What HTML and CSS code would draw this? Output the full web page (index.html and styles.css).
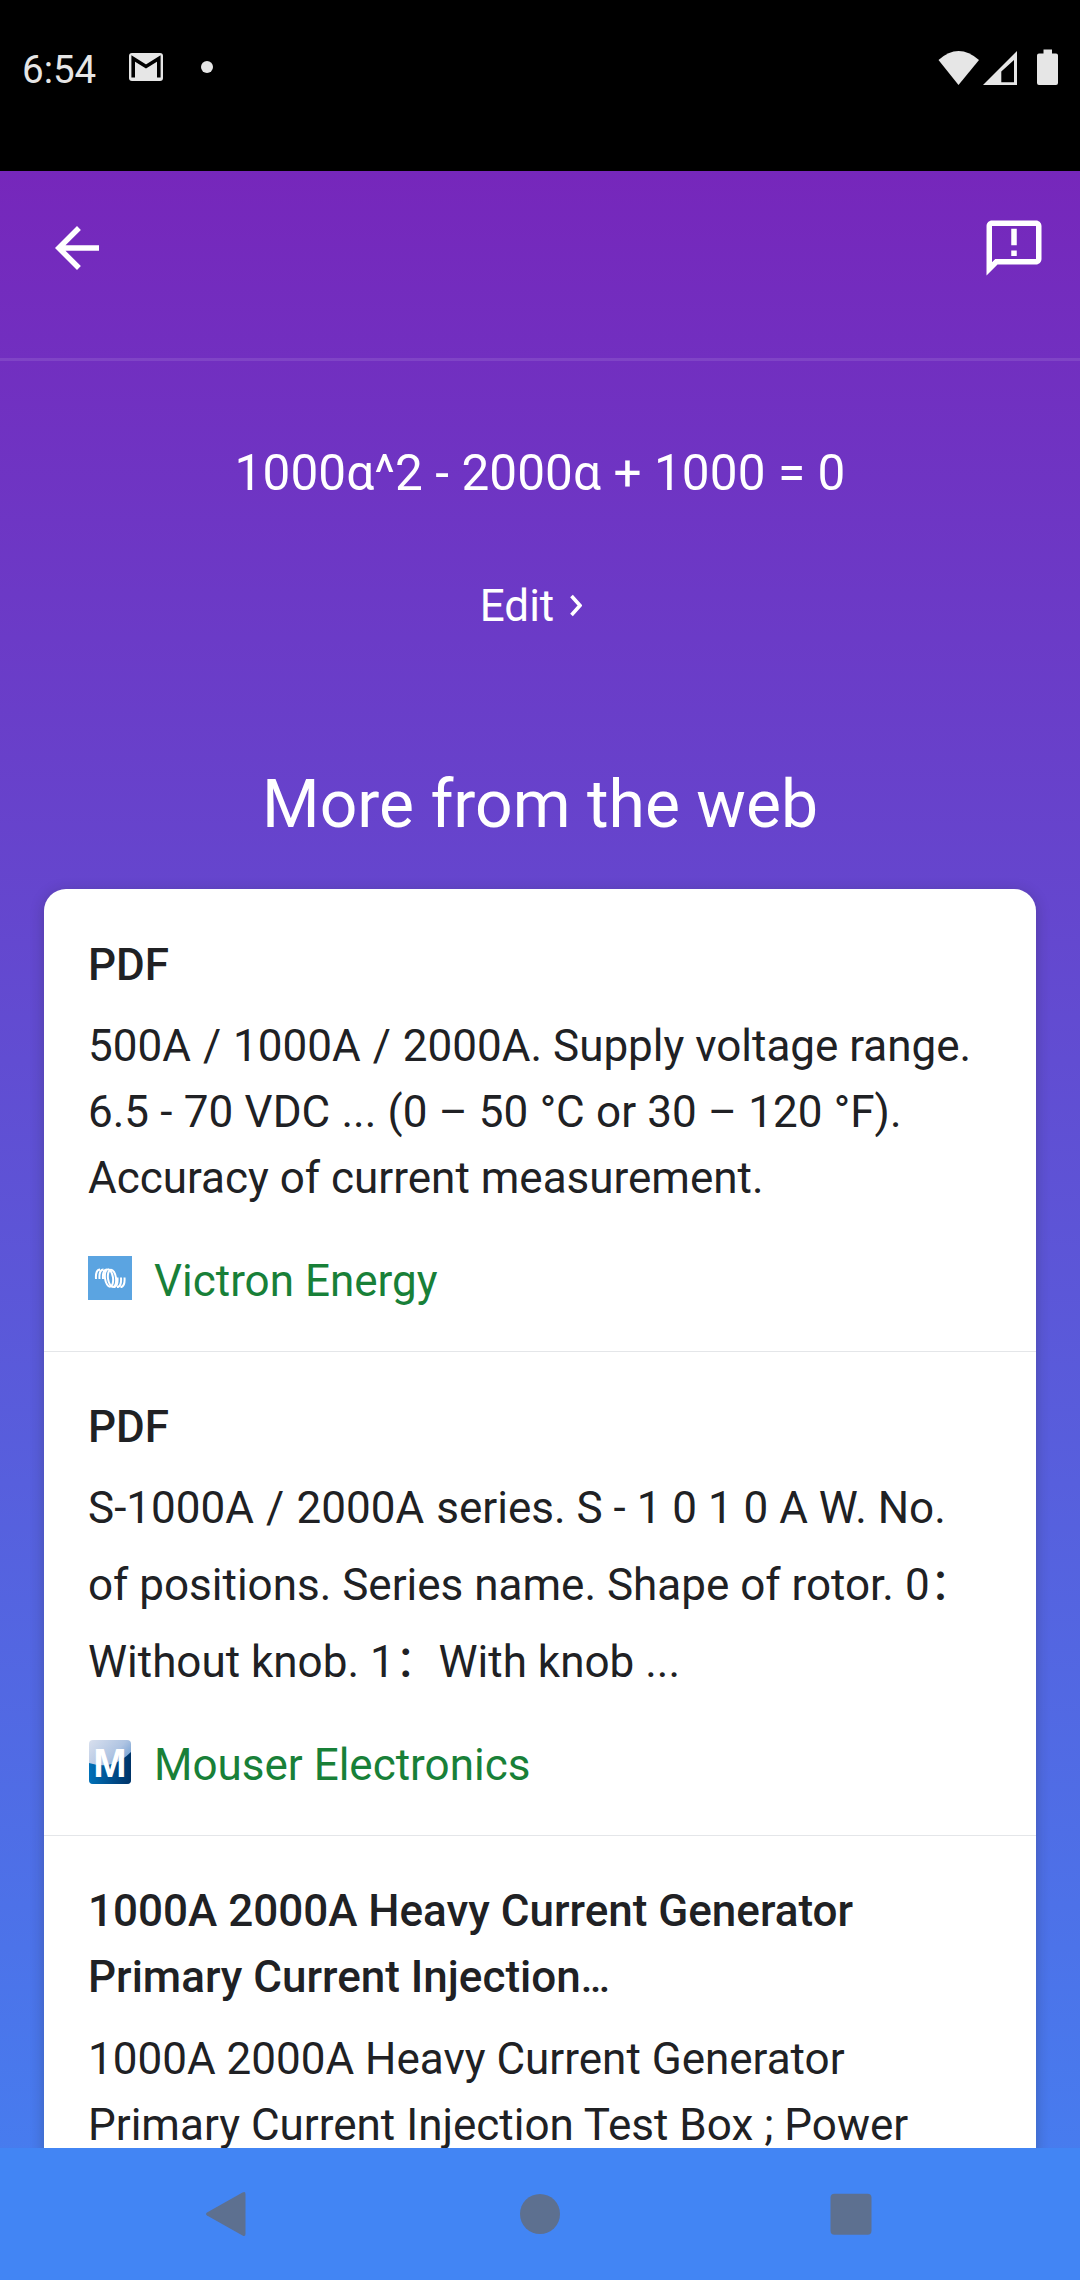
FILE: index.html
```html
<!DOCTYPE html>
<html lang="en">
<head>
<meta charset="utf-8">
<title>More from the web</title>
<link rel="stylesheet" href="styles.css">
</head>
<body>
<div class="screen">
  <header class="status">
    <span class="clock">6:54</span>
    <svg class="mail" width="36" height="30" viewBox="0 0 36 30"><rect x="1" y="1" width="34" height="28" rx="3" fill="#e6e6e6"/><path d="M5.200 25.500V6.500L18 14.500L30.800 6.500V25.500" fill="none" stroke="#000" stroke-width="3.600"/></svg>
    <span class="dot"></span>
    <span class="spacer"></span>
    <svg class="signals" width="122" height="38" viewBox="0 0 122 38" fill="#e6e6e6"><path d="M0.500 11Q20.500 -7 41 11L20.500 36Z"/><path fill-rule="evenodd" d="M45 36L79 2V36ZM63.300 33.300H76V11L63.300 22.500Z"/><path d="M105.500 0.500H114V4.500H118Q120 4.500 120 6.500V34Q120 36 118 36H101Q99 36 99 34V6.500Q99 4.500 101 4.500H105.500Z"/></svg>
  </header>
  <main class="page">
    <div class="toolbar">
      <svg width="66" height="66" viewBox="0 0 24 24" fill="#fff"><path d="M20 11H7.830l5.590-5.590L12 4l-8 8 8 8 1.410-1.410L7.830 13H20z"/></svg>
      <svg width="66" height="66" viewBox="0 0 24 24" fill="#fff"><path d="M20 2H4c-1.100 0-1.990.9-1.990 2L2 22l4-4h14c1.100 0 2-.9 2-2V4c0-1.100-.9-2-2-2zm0 14H5.170L4 17.170V4h16v12zM11 12.900h2v2h-2zM11 5h2v6h-2z"/></svg>
    </div>
    <div class="query">1000α^2 - 2000α + 1000 = 0</div>
    <div class="edit">Edit<svg width="12" height="24" viewBox="0 0 12 24"><path d="M1.500 2L10 11.500L1.500 21" fill="none" stroke="#fff" stroke-width="3.600"/></svg></div>
    <h1 class="heading">More from the web</h1>
    <section class="card">
      <article class="result">
        <h2 class="title">PDF</h2>
        <p class="text"><span class="looser">500A / 1000A / 2000A.</span> Supply voltage range.<br><span class="loose">6.5 - 70 VDC ... (0 – 50 °C or 30 – 120 °F).</span><br>Accuracy of current measurement.</p>
        <div class="source">
          <svg width="44" height="44" viewBox="0 0 44 44"><rect width="44" height="44" fill="#5ba4e1"/><g fill="none" stroke="#fff" stroke-width="2"><path d="M8 23C7.500 17 9 13.500 12 13.500M11.500 23C11 17 12.500 13.500 15.500 13.500M15 23C14.500 17 16 13.500 19 13.500M36.500 21.500C37 27.500 35.500 31 32.500 31M33 21.500C33.500 27.500 32 31 29 31M29.500 21.500C30 27.500 28.500 31 25.500 31"/><ellipse cx="21" cy="22" rx="4" ry="8.700" transform="rotate(-8 21 22)"/><ellipse cx="24" cy="22.300" rx="4" ry="8.700" transform="rotate(-8 24 22.300)"/></g></svg>
          <span>Victron Energy</span>
        </div>
      </article>
      <article class="result wide">
        <h2 class="title">PDF</h2>
        <p class="text"><span class="looser">S-1000A / 2000A series.</span> S - 1 0 1 0 A W. No.<br>of positions. Series name. Shape of rotor. 0<span class="colon">：</span><br>Without knob. 1<span class="colon">：</span> With knob ...</p>
        <div class="source">
          <svg width="44" height="44" viewBox="0 0 44 44"><defs><linearGradient id="sky" x1="0" y1="0" x2="1" y2="1"><stop offset="0" stop-color="#d9e0ee"/><stop offset=".45" stop-color="#afc4e2"/><stop offset=".8" stop-color="#5d92cc"/></linearGradient><linearGradient id="sea" x1="0" x2="1"><stop offset="0" stop-color="#0071b8"/><stop offset=".6" stop-color="#004a87"/><stop offset="1" stop-color="#003468"/></linearGradient></defs><rect x="1" width="42" height="44" rx="4" fill="url(#sky)"/><path d="M1 23Q14 27 24 24T43 12V40Q43 44 39 44H5Q1 44 1 40Z" fill="url(#sea)"/><text x="22" y="37" text-anchor="middle" class="monogram">M</text></svg>
          <span>Mouser Electronics</span>
        </div>
      </article>
      <article class="result">
        <h2 class="title">1000A 2000A Heavy Current Generator<br>Primary Current Injection<span class="ellipsis">…</span></h2>
        <p class="text">1000A 2000A Heavy Current Generator<br>Primary Current Injection Test Box ; Power</p>
      </article>
    </section>
  </main>
  <nav class="navbar">
    <svg width="48" height="48" viewBox="0 0 48 48" fill="#5d7090"><path d="M5 22.500L40.500 2.500Q43.500 1 43.500 4V44Q43.500 47 40.500 45.500L5 25.500Q3 24 5 22.500Z"/></svg>
    <svg class="home" width="48" height="48" viewBox="0 0 48 48" fill="#5d7090"><circle cx="24" cy="24" r="20"/></svg>
    <svg width="48" height="48" viewBox="0 0 48 48" fill="#5d7090"><rect x="3.500" y="3.700" width="41" height="41" rx="4"/></svg>
  </nav>
</div>
</body>
</html>
```
FILE: styles.css
```css
* { box-sizing: border-box; margin: 0; }
body { background: #000; font-family: Roboto, "Noto Sans CJK SC", sans-serif; color: #202124; }
svg { display: block; flex: none; }
.screen { width: 1080px; height: 2280px; display: flex; flex-direction: column; overflow: hidden; }
.status { height: 171px; flex: none; display: flex; align-items: flex-start; padding: 45px 20px 0 22px; background: #000; color: #e6e6e6; }
.clock { width: 106px; margin-top: 1px; font-size: 38.5px; line-height: 48px; }
.mail { margin-top: 7px; }
.dot { width: 12px; height: 12px; margin: 16px 0 0 37px; border-radius: 50%; background: #e6e6e6; }
.spacer { flex: 1; }
.signals { margin-top: 4px; }
.page { flex: 1; min-height: 0; overflow: hidden; background: linear-gradient(#7627bb, #4285f4 2200px); }
.toolbar { height: 190px; display: flex; justify-content: space-between; align-items: flex-start; padding: 44px 33px 0 44px; border-bottom: 3px solid rgba(255, 255, 255, .1); }
.query { margin-top: 79px; text-align: center; color: #fff; font-size: 49.5px; line-height: 66px; letter-spacing: .08px; }
.edit { display: flex; justify-content: center; align-items: center; gap: 16px; margin: 67px 0 0 -18px; color: #fff; font-size: 44px; line-height: 66px; }
.heading { margin-top: 122px; text-align: center; color: #fff; font-size: 66px; font-weight: 400; line-height: 88px; }
.card { margin: 40px 44px 0; background: #fff; border-radius: 22px 22px 0 0; box-shadow: 0 3px 14px rgba(32, 33, 36, .28); }
.result { padding: 42px 44px 37px; border-bottom: 1px solid #e4e6e9; font-size: 44px; line-height: 66px; }
.result:first-child { padding-top: 43px; }
.title { font-size: 44px; font-weight: 500; }
.text { margin-top: 15px; white-space: nowrap; }
.loose { word-spacing: .4px; }
.looser { word-spacing: 1.1px; }
.looser + .loose { word-spacing: .4px; }
.colon { letter-spacing: -11px; line-height: 1; }
.ellipsis { font-size: 41px; letter-spacing: -1px; }
.wide .text { margin-top: 10px; line-height: 77px; }
.wide .looser { word-spacing: 1.3px; }
.source { display: flex; align-items: center; gap: 22px; margin-top: 37px; color: #188038; }
.source svg { margin-bottom: 6px; }
.wide .source { margin-top: 31px; }
.monogram { font: 700 40px "Liberation Sans", sans-serif; fill: #fff; }
.navbar { height: 132px; flex: none; display: flex; justify-content: space-between; align-items: center; padding: 0 205px 0 202px; background: #4285f4; }
.home { margin-left: 3px; }
```
